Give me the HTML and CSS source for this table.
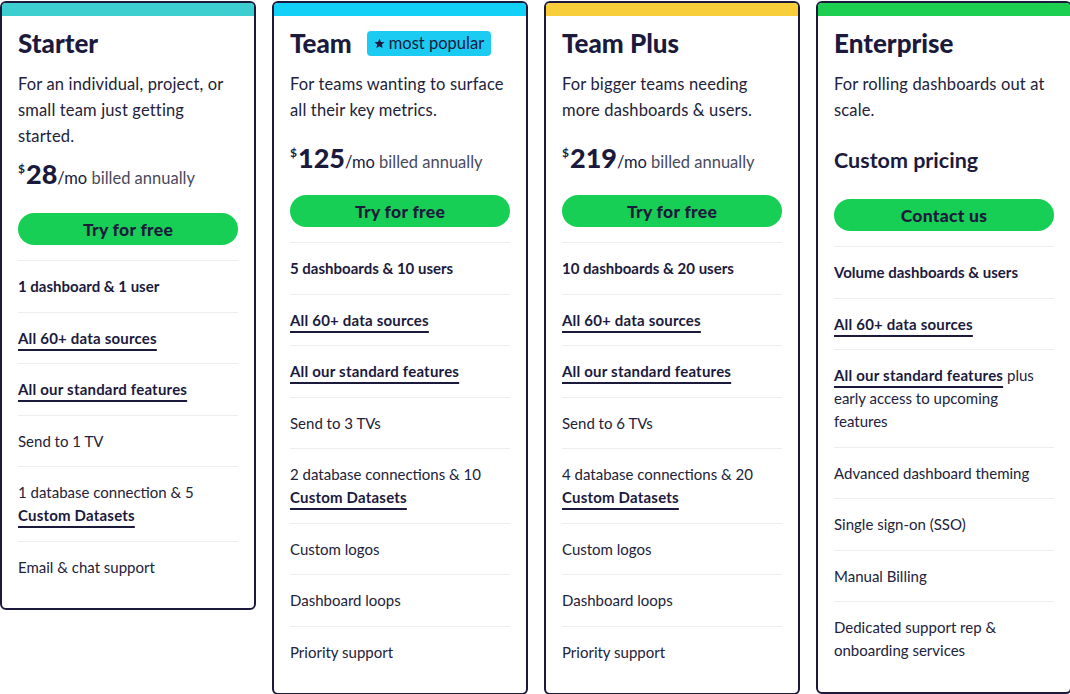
FILE: index.html
```html
<!DOCTYPE html>
<html lang="en">
<head>
  <meta charset="UTF-8" />
  <meta name="viewport" content="width=device-width, initial-scale=1.0" />
  <title>Pricing</title>
  <link rel="stylesheet" href="styles.css">
</head>
<body>
  <div class="plans">

    <div class="plan">
      <div class="stripe stripe-teal"></div>
      <div class="plan-body">
        <h2 class="plan-title">Starter</h2>
        <p class="plan-desc">For an individual, project, or small team just getting started.</p>
        <div class="price price-tight"><sup>$</sup><strong>28</strong><span class="per">/mo</span> billed annually</div>
        <button class="cta">Try for free</button>
        <ul class="features">
          <li class="strong">1 dashboard &amp; 1 user</li>
          <li><span class="link">All 60+ data sources</span></li>
          <li><span class="link">All our standard features</span></li>
          <li>Send to 1 TV</li>
          <li>1 database connection &amp; 5 <span class="link">Custom Datasets</span></li>
          <li>Email &amp; chat support</li>
        </ul>
      </div>
    </div>

    <div class="plan">
      <div class="stripe stripe-cyan"></div>
      <div class="plan-body">
        <div class="title-row">
          <h2 class="plan-title">Team</h2>
          <span class="badge">
            <svg width="11" height="11" viewBox="0 0 24 24"><path d="M12 1.5l3.2 7 7.5.8-5.6 5.1 1.6 7.5L12 18l-6.7 3.9 1.6-7.5L1.3 9.3l7.5-.8z" fill="#1b1a3d"/></svg>
            most popular
          </span>
        </div>
        <p class="plan-desc">For teams wanting to surface all their key metrics.</p>
        <div class="price"><sup>$</sup><strong>125</strong><span class="per">/mo</span> billed annually</div>
        <button class="cta">Try for free</button>
        <ul class="features">
          <li class="strong">5 dashboards &amp; 10 users</li>
          <li><span class="link">All 60+ data sources</span></li>
          <li><span class="link">All our standard features</span></li>
          <li>Send to 3 TVs</li>
          <li>2 database connections &amp; 10 <span class="link">Custom Datasets</span></li>
          <li>Custom logos</li>
          <li>Dashboard loops</li>
          <li>Priority support</li>
        </ul>
      </div>
    </div>

    <div class="plan">
      <div class="stripe stripe-yellow"></div>
      <div class="plan-body">
        <h2 class="plan-title">Team Plus</h2>
        <p class="plan-desc">For bigger teams needing more dashboards &amp; users.</p>
        <div class="price"><sup>$</sup><strong>219</strong><span class="per">/mo</span> billed annually</div>
        <button class="cta">Try for free</button>
        <ul class="features">
          <li class="strong">10 dashboards &amp; 20 users</li>
          <li><span class="link">All 60+ data sources</span></li>
          <li><span class="link">All our standard features</span></li>
          <li>Send to 6 TVs</li>
          <li>4 database connections &amp; 20 <span class="link">Custom Datasets</span></li>
          <li>Custom logos</li>
          <li>Dashboard loops</li>
          <li>Priority support</li>
        </ul>
      </div>
    </div>

    <div class="plan">
      <div class="stripe stripe-green"></div>
      <div class="plan-body">
        <h2 class="plan-title">Enterprise</h2>
        <p class="plan-desc">For rolling dashboards out at scale.</p>
        <div class="price price-custom">Custom pricing</div>
        <button class="cta">Contact us</button>
        <ul class="features">
          <li class="strong">Volume dashboards &amp; users</li>
          <li><span class="link">All 60+ data sources</span></li>
          <li><span class="link">All our standard features</span> plus early access to upcoming features</li>
          <li>Advanced dashboard theming</li>
          <li>Single sign-on (SSO)</li>
          <li>Manual Billing</li>
          <li>Dedicated support rep &amp; onboarding services</li>
        </ul>
      </div>
    </div>

  </div>
</body>
</html>
```

FILE: styles.css
```css
:root {
  --navy: #1b1a3d;
  --text: #22223a;
  --muted: #4a4a5c;
  --green: #17cf55;
  --line: #eeeef0;
}

body {
  margin: 0;
  background: #fff;
  font-family: Lato, 'Open Sans', sans-serif;
  color: var(--text);
  overflow: hidden;
}

.plans {
  display: flex;
  align-items: flex-start;
  gap: 16px;
  padding: 1px 0 0 0;
  width: 1072px;
}

.plan {
  flex: 0 0 256px;
  box-sizing: border-box;
  border: 2px solid var(--navy);
  border-radius: 6px;
  overflow: hidden;
  background: #fff;
}

.stripe {
  height: 13px;
}

.stripe-teal { background: #3dcfd0; }
.stripe-cyan { background: #12d0f6; }
.stripe-yellow { background: #f8cf3b; }
.stripe-green { background: #1ccf50; }

.plan-body {
  padding: 12px 16px 16px;
}

.title-row {
  display: flex;
  align-items: center;
  gap: 15px;
}

.plan-title {
  margin: 0;
  font-size: 26px;
  line-height: 30px;
  font-weight: 900;
  color: var(--navy);
}

.badge {
  display: inline-flex;
  align-items: center;
  gap: 4px;
  height: 25px;
  padding: 0 7px;
  border-radius: 4px;
  background: #1ccbf2;
  color: var(--navy);
  font-size: 16.5px;
}

.plan-desc {
  margin: 13px 0 0;
  font-size: 16.5px;
  letter-spacing: 0.15px;
  line-height: 26px;
  color: var(--text);
}

.price {
  margin-top: 17px;
  height: 36px;
  display: flex;
  align-items: baseline;
  font-size: 16.5px;
  line-height: 36px;
  color: var(--muted);
  white-space: pre;
}

.price-tight {
  margin-top: 7px;
}

.price-tight + .cta {
  margin-top: 21px;
}

.price sup {
  font-size: 12px;
  font-weight: 700;
  color: var(--navy);
  align-self: flex-start;
  line-height: 26px;
  margin-right: 1px;
}

.price strong {
  font-size: 27px;
  font-weight: 900;
  color: var(--navy);
}

.price .per {
  color: var(--navy);
}

.price.price-custom {
  margin-top: 19px;
  height: 38px;
  font-size: 21.5px;
  font-weight: 700;
  color: var(--navy);
}

.cta {
  display: block;
  width: 100%;
  height: 32px;
  margin-top: 19px;
  border: none;
  border-radius: 16px;
  background: var(--green);
  color: var(--navy);
  font-family: inherit;
  font-size: 17.5px;
  letter-spacing: 0.3px;
  font-weight: 900;
}

.features {
  list-style: none;
  margin: 15px 0 0;
  padding: 0;
}

.features li {
  border-top: 1px solid var(--line);
  padding: 14px 0 13.5px;
  font-size: 15px;
  line-height: 23px;
  color: var(--text);
}

.features li.strong {
  font-weight: 700;
  color: var(--navy);
}

.link {
  font-weight: 700;
  letter-spacing: 0.2px;
  color: var(--navy);
  text-decoration: underline;
  text-decoration-thickness: 2px;
  text-underline-offset: 5px;
}
```
